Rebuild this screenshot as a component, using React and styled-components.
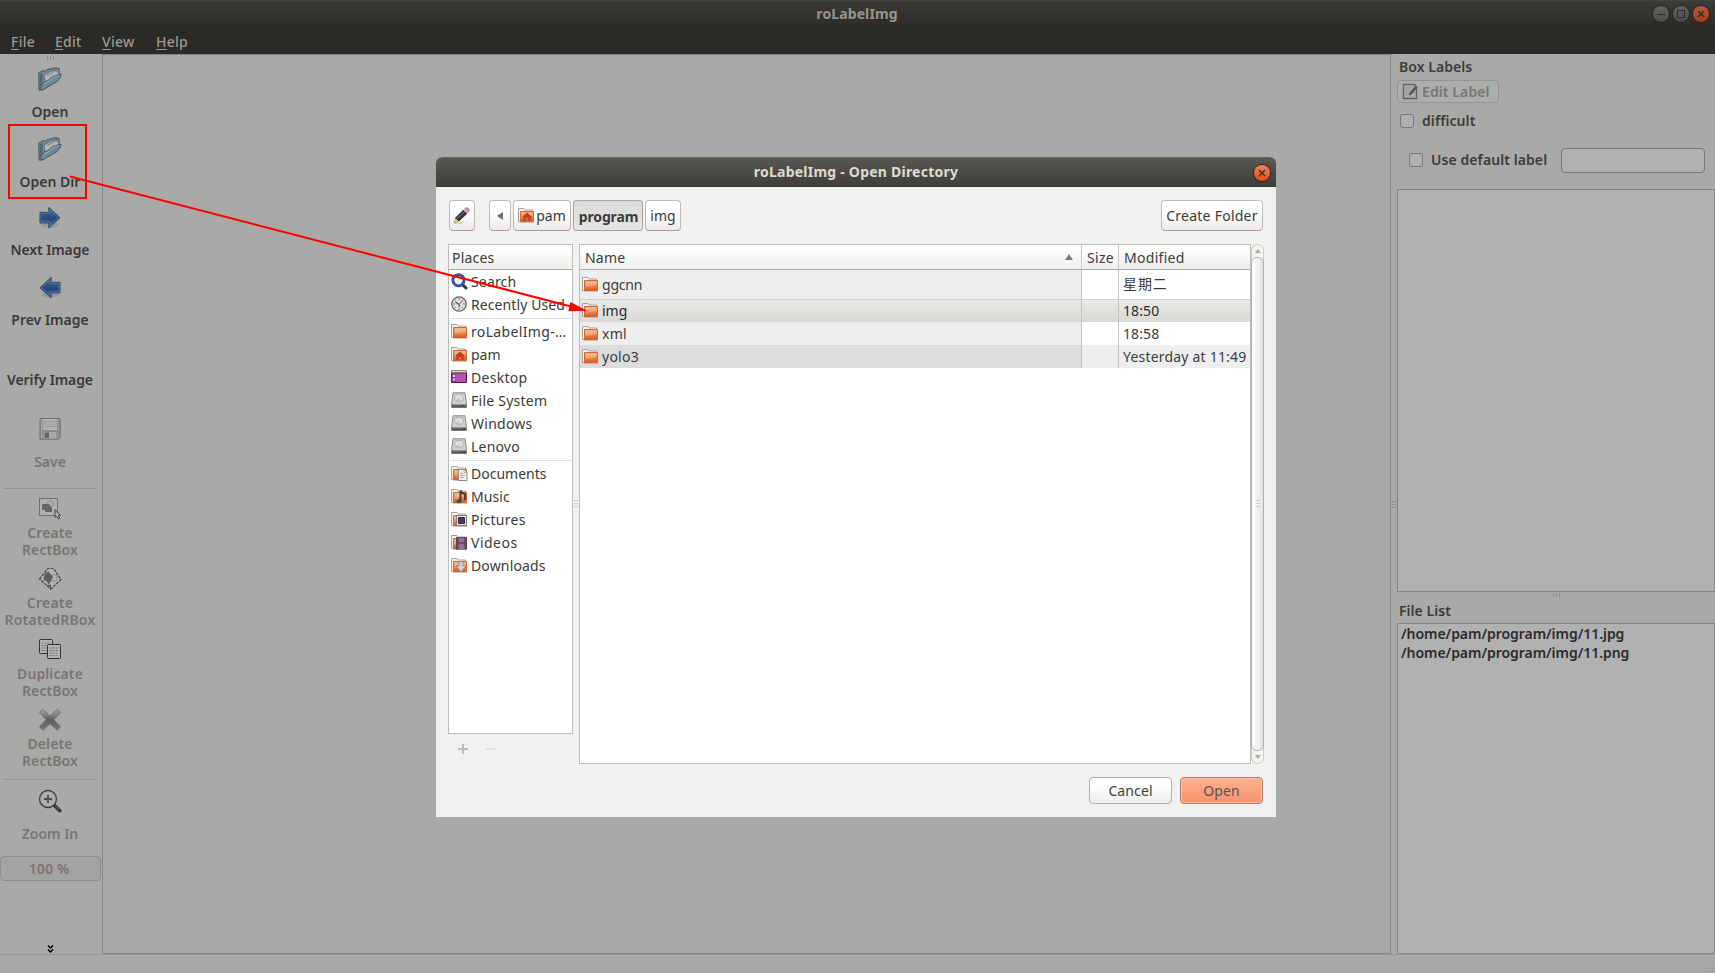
import styled, { createGlobalStyle } from "styled-components";

const GlobalStyle = createGlobalStyle`
  * {
    box-sizing: border-box;
  }
  body {
    margin: 0;
    overflow: hidden;
    font-family: "Noto Sans", "Noto Sans CJK SC", sans-serif;
    font-size: 14px;
    color: #3c3c3c;
    background: #a9a9a7;
  }
`;

const Window = styled.div`
  position: relative;
  display: flex;
  flex-direction: column;
  width: 1715px;
  height: 973px;
  background: #a9a9a7;
  font-weight: 600;
`;

const Header = styled.header`
  height: 54px;
  background: linear-gradient(#45443f 0, #3b3a36 2px, #2b2a26 28px, #2b2a26);
`;
const TitleBar = styled.div`
  display: grid;
  grid-template-columns: 1fr auto 1fr;
  align-items: center;
  height: 28px;
  padding-right: 6px;
`;
const WindowTitle = styled.h1`
  grid-column: 2;
  margin: 0;
  padding-left: 5px;
  font-size: 14px;
  line-height: 28px;
  font-weight: 700;
  color: #96958e;
  letter-spacing: 0.1px;
`;
const WindowButtons = styled.div`
  display: flex;
  justify-content: flex-end;
  gap: 4px;
`;
const RoundButton = styled.span`
  display: flex;
  align-items: center;
  justify-content: center;
  width: 16px;
  height: 16px;
  border-radius: 50%;
  color: ${(p) => p.$mark || "#2b2a26"};
  background: ${(p) => p.$bg || "linear-gradient(#64635d, #4c4b46)"};
  box-shadow: 0 0 0 1px #24231f;
`;
const MenuBar = styled.nav`
  display: flex;
  height: 26px;
`;
const MenuItem = styled.span`
  width: ${(p) => p.$w}px;
  padding-left: ${(p) => p.$pad || 0}px;
  line-height: 27px;
  color: #9b9992;
  font-weight: 500;
  letter-spacing: 0.25px;
  u {
    text-underline-offset: 2px;
    text-decoration-thickness: 1px;
  }
`;

const Main = styled.div`
  display: flex;
  height: 900px;
`;
const ToolBar = styled.aside`
  display: flex;
  flex-direction: column;
  align-items: center;
  width: 102px;
  height: 900px;
  padding: 2px 2px 0 0;
`;
const Tool = styled.div`
  display: flex;
  flex-direction: column;
  align-items: center;
  flex: none;
  width: 100px;
  height: ${(p) => p.$h}px;
  color: ${(p) => (p.$off ? "#777572" : "#3a3a3a")};
`;
const ToolIcon = styled.div`
  display: flex;
  flex: none;
  align-items: center;
  justify-content: center;
  height: ${(p) => (p.$empty ? 24 : 31)}px;
`;
const ToolLabel = styled.div`
  display: flex;
  flex: none;
  align-items: center;
  height: 34px;
  margin-top: ${(p) => p.$shift || 0}px;
  line-height: 17px;
  text-align: center;
  white-space: pre;
  letter-spacing: ${(p) => p.$track || 0}px;
`;
const ToolLine = styled.div`
  flex: none;
  width: 92px;
  height: 2px;
  margin-bottom: ${(p) => p.$mb}px;
  border-top: 1px solid #949492;
  border-bottom: 1px solid #aeaeac;
`;
const ZoomBox = styled.div`
  flex: none;
  align-self: flex-start;
  width: 101px;
  height: 25px;
  border: 1px solid #8e8c8a;
  border-radius: 4px;
  background: #a5a3a1;
  line-height: 24px;
  text-align: center;
  padding-right: 3px;
  color: #777572;
  letter-spacing: 0.15px;
`;
const Spacer = styled.div`
  flex: 1;
`;
const Grip = styled.div`
  flex: none;
  width: ${(p) => (p.$vertical ? 4 : 7)}px;
  height: ${(p) => (p.$vertical ? 7 : 4)}px;
  margin-bottom: ${(p) => p.$mb || 0}px;
  background: repeating-linear-gradient(
    ${(p) => (p.$vertical ? "180deg" : "90deg")},
    ${(p) => p.$color || "#8b8b89"} 0 1px,
    transparent 1px 3px
  );
`;
const Canvas = styled.main`
  width: 1289px;
  height: 900px;
  border: 1px solid #858583;
`;
const Splitter = styled.div`
  display: flex;
  align-items: center;
  width: 6px;
  padding-left: 1px;
`;

const SidePanel = styled.aside`
  display: flex;
  flex-direction: column;
  width: 318px;
`;
const PanelTitle = styled.div`
  height: 26px;
  padding-left: 2px;
  line-height: ${(p) => p.$line || 26}px;
  letter-spacing: 0.05px;
`;
const EditButton = styled.div`
  display: flex;
  align-items: center;
  gap: 4px;
  width: 102px;
  height: 23px;
  padding-left: 4px;
  border: 1px solid #949492;
  border-radius: 4px;
  background: #adadab;
  color: #777675;
  letter-spacing: 0.1px;
`;
const CheckRow = styled.div`
  display: flex;
  align-items: center;
  height: ${(p) => p.$h}px;
  margin-bottom: ${(p) => p.$mb || 0}px;
  padding-left: ${(p) => p.$pad}px;
`;
const CheckBox = styled.span`
  width: 14px;
  height: 14px;
  margin-right: 8px;
  border: 1px solid #767674;
  border-radius: 3px;
  background: #b0b0ae;
`;
const CheckText = styled.span`
  width: ${(p) => p.$w || 120}px;
  padding-bottom: 1px;
  letter-spacing: 0.08px;
`;
const DefaultInput = styled.div`
  width: 144px;
  height: 25px;
  border: 1px solid #777775;
  border-radius: 4px;
  background: #b1b1b0;
`;
const ListBox = styled.div`
  height: ${(p) => p.$h}px;
  padding-left: 3px;
  border: 1px solid #858583;
  background: #b1b1b1;
  color: #2b2b2b;
  line-height: 19px;
  letter-spacing: -0.04px;
`;
const GripRow = styled.div`
  display: flex;
  justify-content: center;
  padding-top: 1px;
  height: 5px;
`;
const StatusBar = styled.footer`
  display: flex;
  align-items: flex-end;
  justify-content: flex-end;
  height: 19px;
  border-top: 1px solid #979795;
`;

/* the file chooser floats over the main window */
const Dialog = styled.section`
  position: absolute;
  left: 436px;
  top: 157px;
  display: flex;
  flex-direction: column;
  width: 840px;
  height: 660px;
  border-radius: 6px 6px 0 0;
  background: #f2f1ef;
  font-weight: 400;
  color: #3c3c3c;
`;
const DialogBar = styled.div`
  display: grid;
  grid-template-columns: 1fr auto 1fr;
  align-items: center;
  height: 30px;
  padding-right: 6px;
  border-radius: 6px 6px 0 0;
  border-top: 1px solid #6a675a;
  background: linear-gradient(#595750, #3e3d39);
`;
const DialogTitle = styled.h2`
  grid-column: 2;
  margin: 0;
  padding: 0 0 2px 6px;
  font-size: 14px;
  font-weight: 700;
  color: #dfdbd2;
  letter-spacing: 0.23px;
`;
const DialogBody = styled.div`
  display: flex;
  flex-direction: column;
  padding: 13px 12px 0 12px;
`;
const PathRow = styled.div`
  display: flex;
  width: 815px;
  height: 44px;
  padding-left: 1px;
`;
const PathButton = styled.span`
  display: flex;
  align-items: center;
  justify-content: center;
  gap: 1px;
  width: ${(p) => p.$w}px;
  height: 31px;
  margin-right: ${(p) => p.$mr || 0}px;
  margin-left: ${(p) => (p.$last ? "auto" : 0)};
  padding: ${(p) => (p.$active ? "2px 0 0 1px" : 0)};
  border: 1px solid ${(p) => (p.$active ? "#a9a59f" : "#bfbab4")};
  border-bottom-color: #a5a19b;
  border-radius: 4px;
  background: ${(p) =>
    p.$active ? "linear-gradient(#dddbd9, #e6e4e2)" : "linear-gradient(#fff 40%, #ebe9e7)"};
  font-weight: ${(p) => (p.$active ? 700 : 400)};
  letter-spacing: ${(p) => p.$track || 0}px;
  white-space: nowrap;
`;
const Panes = styled.div`
  display: flex;
  height: 520px;
`;
const PlacesPane = styled.div`
  flex: none;
  width: 125px;
`;
const PlacesBox = styled.div`
  height: 490px;
  border: 1px solid #bfbbb6;
  background: #fff;
`;
const HeadRow = styled.div`
  display: flex;
  height: 25px;
  border-bottom: 1px solid #aeaaa5;
  background: linear-gradient(#fff, #f0efed);
  line-height: 25px;
`;
const HeadCell = styled.div`
  display: flex;
  align-items: center;
  justify-content: space-between;
  width: ${(p) => p.$w}px;
  padding: 0 8px 0 ${(p) => p.$pad}px;
  border-right: ${(p) => (p.$end ? "none" : "1px solid #cbc8c4")};
  letter-spacing: ${(p) => p.$track || 0}px;
`;
const PlaceRow = styled.div`
  display: flex;
  align-items: center;
  gap: 3px;
  height: 23px;
  padding-left: 2px;
  white-space: nowrap;
  letter-spacing: ${(p) => p.$track || 0}px;
  svg {
    flex: none;
  }
`;
const PlaceLine = styled.div`
  height: 4px;
  margin: 0 1px;
  background: linear-gradient(#fff 2px, #e1e0df 2px 3px, #fff 3px);
`;
const AddRemove = styled.div`
  display: flex;
  gap: 18px;
  padding: 10px 0 0 10px;
`;
const FilesBox = styled.div`
  flex: none;
  width: 672px;
  height: 520px;
  border: 1px solid #bfbbb6;
  background: #fff;
`;
const FileRow = styled.div`
  display: flex;
  height: ${(p) => p.$h || 23}px;
  background: ${(p) => p.$bg || "#fff"};
  color: ${(p) => (p.$hot ? "#2a2a2a" : "#3c3c3c")};
  box-shadow: ${(p) => (p.$hot ? "inset 0 1px #cfcecb" : "none")};
`;
const FileCell = styled.div`
  display: flex;
  align-items: center;
  gap: 3px;
  width: ${(p) => p.$w}px;
  padding-left: ${(p) => p.$pad || 0}px;
  border-right: ${(p) => (p.$end ? "none" : "1px solid #c4c3c1")};
  background: ${(p) => p.$bg || "none"};
  letter-spacing: ${(p) => p.$track || 0}px;
  line-height: 21px;
  padding-bottom: ${(p) => p.$lift || 0}px;
  white-space: nowrap;
`;
const PaneGap = styled.div`
  display: flex;
  flex: none;
  align-items: center;
  justify-content: center;
  width: 6px;
  padding-bottom: 2px;
`;
const ScrollBar = styled.div`
  display: flex;
  flex: none;
  flex-direction: column;
  align-items: center;
  width: 13px;
  height: 520px;
  border: 1px solid #cbc8c4;
  border-radius: 7px;
  background: #f4f3f1;
`;
const ScrollArrow = styled.div`
  display: flex;
  align-items: center;
  height: 12px;
`;
const ScrollThumb = styled.div`
  display: flex;
  align-items: center;
  justify-content: center;
  width: 13px;
  height: 494px;
  padding-bottom: 2px;
  border: 1px solid #b1aeaa;
  border-radius: 6px;
  background: linear-gradient(90deg, #fff, #e4e3e1);
`;
const Actions = styled.div`
  display: flex;
  justify-content: flex-end;
  gap: 8px;
  width: 815px;
  padding-top: 13px;
`;
const ActionButton = styled.span`
  width: 83px;
  height: 27px;
  border: 1px solid ${(p) => (p.$primary ? "#a87c68" : "#b5b1ac")};
  border-radius: 4px;
  background: ${(p) =>
    p.$primary ? "linear-gradient(#ffb091, #f6926b)" : "linear-gradient(#fff 30%, #ededec)"};
  box-shadow: ${(p) => (p.$primary ? "inset 0 0 0 1px #ffbfa5" : "none")};
  line-height: 25px;
  text-align: center;
  color: ${(p) => (p.$primary ? "#565353" : "#3f3f3f")};
  letter-spacing: 0.1px;
`;

/* red annotation drawn on top of everything */
const Mark = styled.svg`
  position: absolute;
  left: 0;
  top: 0;
  pointer-events: none;
`;

const OpenIcon = () => (
  <svg width="24" height="24" viewBox="0 0 24 24">
    <defs>
      <linearGradient id="openFront" x1="0" y1="0" x2="1" y2="1">
        <stop offset="0" stopColor="#86a5b3" />
        <stop offset="1" stopColor="#4e7388" />
      </linearGradient>
    </defs>
    <path d="M.8 6 5 3.600l2.800.6 1-1.500L18 .6l3.300 1.200-.6 6L5 23H1z" fill="#728b97" stroke="#454f54" strokeWidth=".9" />
    <path d="M6 8 12 4.500l7-2 2.500.5L20 8 7 16.500z" fill="#b2b3b2" stroke="#5b6164" strokeWidth=".8" />
    <path d="m9 8.500 9-5M18 2l1 3 2-1" fill="none" stroke="#6c7072" strokeWidth=".8" />
    <path d="M1.500 22.800 5.300 15.500 10 13.500l4.200-3.600L23.200 7c-.4 3-2 5-4 7.500L5.500 22.500z" fill="url(#openFront)" stroke="#3d525e" strokeWidth=".9" />
    <path d="M6 16.800 10.500 14.500l4-3.500 7-2.800" fill="none" stroke="#9cb6c1" strokeWidth=".8" />
    <path d="M1.800 7v14l2.800-6V6" fill="#566871" />
  </svg>
);

const ArrowIcon = ({ left }) => (
  <svg width="22" height="24" viewBox="0 0 22 24" transform={left ? "scale(-1 1)" : undefined}>
    <defs>
      <linearGradient id="arrowFill" x1="0" y1="0" x2="0" y2="1">
        <stop offset="0" stopColor="#51709a" />
        <stop offset=".55" stopColor="#234879" />
        <stop offset="1" stopColor="#4470a0" />
      </linearGradient>
    </defs>
    <ellipse cx="11" cy="19" rx="9" ry="2.500" fill="#999997" />
    <path d="M1 6.300h8.800V1.400L21 11.700 9.800 22v-5H1z" fill="url(#arrowFill)" stroke="#2e486c" />
    <path d="M2 7.300h8.800V3.700l8.500 8-8.500 8V16H2z" fill="none" stroke="#6683a8" strokeWidth=".7" />
  </svg>
);

const SaveIcon = () => (
  <svg width="22" height="22" viewBox="0 0 22 22">
    <path d="M1 1.500q0-1 1-1h18q1.200 0 1.200 1.200V19l-2 2.300H2q-1 0-1-1z" fill="#929291" stroke="#6e6e6d" />
    <path d="M3.800 1h14.400v11H3.800z" fill="#b1b1b0" />
    <path d="M4 3.500h14M4 6h14M4 8.500h14" stroke="#9b9b9a" />
    <path d="M5 13.500h13V21H5z" fill="#a9a9a8" stroke="#878786" />
    <path d="M6 14.500h4V20H6z" fill="#666" />
    <path d="M2.500 2v17.500h2" fill="none" stroke="#adadac" />
  </svg>
);

const CreateIcon = ({ rotated }) =>
  rotated ? (
    <svg width="24" height="24" viewBox="0 0 24 24">
      <path d="M1.500 12 10 1.500h5.500L23 12.500 13 22z" fill="#b2b2b1" stroke="#444" strokeWidth="1.200" strokeDasharray="3 1" />
      <circle cx="16" cy="11" r="3.300" fill="none" stroke="#8a8a89" />
      <path d="m10.500 4.500 4.500 5.500-4 7.500-2.500-3.500-3-1 1-6z" fill="#5c5c5c" />
      <path d="m9 19 3.500-1v4.500" fill="none" stroke="#444" />
    </svg>
  ) : (
    <svg width="24" height="24" viewBox="0 0 24 24">
      <path d="M1.500 1.500h18v17h-18z" fill="#b0b0af" stroke="#333" strokeDasharray="1 1" />
      <circle cx="12" cy="7" r="3.200" fill="none" stroke="#898988" />
      <path d="M4 7h7l3 4v4H7v-2H4z" fill="#666" />
      <path d="M17 12.500v8l1.800-1.400 1.600 3 1.500-.8-1.400-2.800h2z" fill="#b0b0af" stroke="#3c3c3c" strokeWidth=".9" />
    </svg>
  );

const DuplicateIcon = () => (
  <svg width="24" height="22" viewBox="0 0 24 22">
    <rect x="1.500" y="1.500" width="13" height="14" rx="1" fill="#b0b0af" stroke="#333" />
    <path d="M3.500 5h8M3.500 7.500h8M3.500 10h6M3.500 12.500h6" stroke="#757574" strokeDasharray="2 1" />
    <rect x="9.500" y="6.500" width="13" height="14" rx="1" fill="#b3b3b2" stroke="#333" />
    <path d="M11.500 10h9M11.500 12.500h9M11.500 15h9M11.500 17.500h9" stroke="#757574" strokeDasharray="2 1" />
  </svg>
);

const DeleteIcon = () => (
  <svg width="24" height="24" viewBox="0 0 24 24">
    <defs>
      <linearGradient id="deleteFill" x1="0" y1="0" x2="0" y2="1">
        <stop offset="0" stopColor="#a5a5a4" />
        <stop offset=".5" stopColor="#5e5e5e" />
        <stop offset="1" stopColor="#757575" />
      </linearGradient>
    </defs>
    <path
      d="M4.800 1.500 12 8l7.200-6.500 3.300 3-6.600 7.200 6.600 7-3.300 3.600L12 15.800l-7.200 6.500-3.300-3.600 6.600-7-6.600-7.200z"
      fill="url(#deleteFill)"
      stroke="#737372"
      strokeLinejoin="round"
    />
  </svg>
);

const ZoomIcon = () => (
  <svg width="24" height="24" viewBox="0 0 24 24">
    <path d="m17 17 4.800 4.800" stroke="#393939" strokeWidth="3.600" strokeLinecap="round" />
    <path d="m18 17.500 3.500 3.500" stroke="#787877" strokeWidth=".8" />
    <circle cx="10" cy="10" r="8.500" fill="#aeaead" stroke="#3d3d3c" strokeWidth="1.300" />
    <path d="M10 6v8M6 10h8" stroke="#4f4f4e" strokeWidth="1.800" />
  </svg>
);

const EditIcon = () => (
  <svg width="16" height="17" viewBox="0 0 16 17">
    <path d="M1.500 1.500h11L14.500 4v11.500h-13z" fill="#aaaaa9" stroke="#636362" strokeWidth="1.300" />
    <path d="M3.500 5h6M3.500 7.500h4M3.500 10h3" stroke="#979796" />
    <path d="m13.500 3.500 1.500 1-5.500 6.500-2.500 1 1-2.500z" fill="#5b5b5a" stroke="#4a4a4a" strokeWidth=".8" />
  </svg>
);

const FolderIcon = ({ kind }) => (
  <svg width="17" height="17" viewBox="0 0 17 17">
    <defs>
      <linearGradient id="folderFill" x1="0" y1="0" x2="0" y2="1">
        <stop offset="0" stopColor="#f5b47d" />
        <stop offset="1" stopColor="#df5a20" />
      </linearGradient>
    </defs>
    <path d="M.5 14.500v-13h5.500l1 1.500h7.500V14.500z" fill="#f6f5f4" stroke="#a3a09d" />
    <path d="M2.500 4.500h13v10h-13z" fill="url(#folderFill)" stroke="#d26434" />
    <path d="M3.500 5.500h11v3.500l-11 2z" fill="#fff" opacity=".22" />
    <path d="M2 15.500h14" stroke="#b6b2ae" opacity=".7" />
    {kind === "home" && <path d="m3.800 10 5.200-4.500 5.200 4.500h-1.500v4h-2.400v-3H7.800v3H5.200v-4z" fill="#bf4022" />}
    {kind === "documents" && (
      <g>
        <path d="M7.500 4.500h6l2.500 2.500v8.500H7.500z" fill="#f0efee" stroke="#8e8c8a" />
        <path d="M13 4.500V7.500h3M9 8.500h3M9 10.500h5M9 12.500h4" fill="none" stroke="#aaa8a6" />
      </g>
    )}
    {kind === "music" && (
      <g>
        <path d="M9.500 13V2.500q1 3 4.500 3.500v6" fill="none" stroke="#3c3937" strokeWidth="1.900" />
        <ellipse cx="8" cy="13.200" rx="2.500" ry="2" fill="#4c4947" />
      </g>
    )}
    {kind === "pictures" && (
      <g>
        <path d="M5.500 4.500h10v10h-10z" fill="#f1efee" stroke="#7a7876" />
        <path d="M7.500 6.500h6v6h-6z" fill="#4a3b66" stroke="#2f2a36" />
      </g>
    )}
    {kind === "videos" && (
      <g>
        <path d="M5 3h11v12.500H5z" fill="#3a3439" />
        <path d="M7.500 3.500h6V8.500h-6zM7.500 9.500h6v5.500h-6z" fill="#966a9b" />
        <path d="M6.200 3.500v12M14.800 3.500v12" stroke="#c8c5c6" strokeDasharray="1 1" strokeWidth=".8" />
      </g>
    )}
    {kind === "downloads" && (
      <path d="M8 4.500h4V9h3l-5 6-5-6h3z" fill="#d5d3d1" stroke="#8a8784" strokeWidth=".9" />
    )}
  </svg>
);

const PlaceIcon = ({ kind }) => {
  if (kind === "search") {
    return (
      <svg width="17" height="17" viewBox="0 0 17 17">
        <path d="m11.500 11.500 3.500 3.500" stroke="#333" strokeWidth="3" strokeLinecap="round" />
        <circle cx="7.500" cy="7.200" r="5.600" fill="#eef2f8" stroke="#27408b" strokeWidth="2.800" />
        <circle cx="7.500" cy="7.200" r="5.800" fill="none" stroke="#6b86c4" strokeWidth=".7" />
      </svg>
    );
  }
  if (kind === "recent") {
    return (
      <svg width="17" height="17" viewBox="0 0 17 17">
        <circle cx="8" cy="8" r="7.200" fill="#dededc" stroke="#62625f" strokeWidth="1.300" />
        <path d="M8 2v2M8 12v2M2 8h2M12 8h2M3.800 3.800l1.200 1.200M11 11l1.200 1.200M3.800 12.200 5 11" stroke="#888" />
        <path d="M4.500 6 8 8.500l.5 2.500" fill="none" stroke="#444" strokeWidth="1.100" />
        <path d="m8 8.500 4.500-5" stroke="#d94a38" />
      </svg>
    );
  }
  if (kind === "desktop") {
    return (
      <svg width="17" height="17" viewBox="0 0 17 17">
        <path d="M.5 2.500h15v11h-15z" fill="#a33ca0" stroke="#5a1858" />
        <path d="M4.500 5.500h10v7h-10z" fill="#c268bf" opacity=".6" />
        <path d="M.5 1.500h15v2H.5z" fill="#dcd9bf" stroke="#77735c" strokeWidth=".8" />
        <path d="M2 6h1.800v2H2zM2 9.500h1.800v2H2z" fill="#f2e4f1" />
      </svg>
    );
  }
  if (kind === "drive") {
    return (
      <svg width="17" height="17" viewBox="0 0 17 17">
        <path d="M2 .8h12l1.500 11.700v3H.5v-3z" fill="#d0d0ce" stroke="#888886" />
        <ellipse cx="8" cy="5.800" rx="4.500" ry="3.500" fill="#dfdfdd" stroke="#b1b1af" />
        <path d="M5.500 9 8 6.500" stroke="#a1a19f" />
        <path d="M1 12.500h14v2.800H1z" fill="#555553" />
        <path d="M2 13h8" stroke="#8d8d8b" />
      </svg>
    );
  }
  return <FolderIcon kind={kind} />;
};

const PencilIcon = () => (
  <svg width="18" height="18" viewBox="0 0 18 18">
    <path d="M1 15.500q4 2 10-.5" fill="none" stroke="#d9d5a0" strokeWidth="1.500" />
    <path d="m1 16 1.500-5 3.500 3z" fill="#e9dd93" stroke="#8a8453" strokeWidth=".6" />
    <path d="M2.500 11 10.500 3l3.500 3.500L6 14z" fill="#353533" stroke="#1f1f1e" strokeWidth=".7" />
    <path d="M4.500 11.500 11.500 4.500" stroke="#777774" />
    <path d="m10.500 3 1.300-1.300 3.500 3.500L14 6.500z" fill="#c3c3c1" />
    <path d="m11.800 1.700 1.200-1q2.500-.5 3.500 2.500l-1.200 2z" fill="#d78bbd" stroke="#a7628f" strokeWidth=".6" />
  </svg>
);

const Cross = () => (
  <svg width="8" height="8" viewBox="0 0 8 8">
    <path d="m1 1 6 6M7 1 1 7" stroke="currentColor" strokeWidth="1.300" />
  </svg>
);

const tools = [
  { text: "Open", h: 70, icon: <OpenIcon /> },
  { text: "Open Dir", h: 69, icon: <OpenIcon /> },
  { text: "Next Image", h: 70, icon: <ArrowIcon />, shift: -1, track: -0.1 },
  { text: "Prev Image", h: 66, icon: <ArrowIcon left />, shift: -1 },
  { text: "Verify Image", h: 75, track: -0.1 },
  { text: "Save", h: 75, icon: <SaveIcon />, off: true },
  { line: true, mb: 3 },
  { text: "Create\nRectBox", h: 70, icon: <CreateIcon />, off: true, track: 0.1 },
  { text: "Create\nRotatedRBox", h: 70, icon: <CreateIcon rotated />, off: true, track: 0.22 },
  { text: "Duplicate\nRectBox", h: 71, icon: <DuplicateIcon />, off: true, shift: 1, track: 0.1 },
  { text: "Delete\nRectBox", h: 75, icon: <DeleteIcon />, off: true, track: 0.1 },
  { line: true, mb: 4 },
  { text: "Zoom In", h: 71, icon: <ZoomIcon />, off: true },
];

const places = [
  { text: "Search", kind: "search", track: 0.15 },
  { text: "Recently Used", kind: "recent", track: 0.1 },
  { line: true },
  { text: "roLabelImg-…", kind: "folder", track: 0.35 },
  { text: "pam", kind: "home" },
  { text: "Desktop", kind: "desktop", track: 0.3 },
  { text: "File System", kind: "drive", track: 0.25 },
  { text: "Windows", kind: "drive", track: 0.25 },
  { text: "Lenovo", kind: "drive", track: 0.2 },
  { line: true },
  { text: "Documents", kind: "documents" },
  { text: "Music", kind: "music", track: 0.1 },
  { text: "Pictures", kind: "pictures", track: 0.25 },
  { text: "Videos", kind: "videos", track: 0.5 },
  { text: "Downloads", kind: "downloads", track: 0.15 },
];

const files = [
  { name: "ggcnn", modified: "星期二", h: 29, first: "#eeeeee", track: 0.9, lift: 2, nameTrack: -0.2 },
  { name: "img", modified: "18:50", bg: "linear-gradient(#ebeae8, #dad9d6)", hot: true, track: 0.1 },
  { name: "xml", modified: "18:58", first: "#eeeeee", track: 0.1, nameTrack: 0.3 },
  { name: "yolo3", modified: "Yesterday at 11:49", bg: "#eeeeee", first: "#dcdcdc", track: 0.2, nameTrack: 0.25 },
];

const FileDialog = () => (
  <Dialog>
    <DialogBar>
      <DialogTitle>roLabelImg - Open Directory</DialogTitle>
      <WindowButtons>
        <RoundButton $bg="linear-gradient(#f2825c, #dd4e1d)" $mark="#4a2a1c">
          <Cross />
        </RoundButton>
      </WindowButtons>
    </DialogBar>
    <DialogBody>
      <PathRow>
        <PathButton $w={26} $mr={14}>
          <PencilIcon />
        </PathButton>
        <PathButton $w={22} $mr={2}>
          <svg width="6" height="8" viewBox="0 0 6 8">
            <path d="M6 0v8L0 4z" fill="#72706d" />
          </svg>
        </PathButton>
        <PathButton $w={58} $mr={2}>
          <FolderIcon kind="home" />
          pam
        </PathButton>
        <PathButton $w={70} $mr={2} $track={-0.15} $active>
          program
        </PathButton>
        <PathButton $w={36}>img</PathButton>
        <PathButton $w={102} $track={0.25} $last>
          Create Folder
        </PathButton>
      </PathRow>
      <Panes>
        <PlacesPane>
          <PlacesBox>
            <HeadRow>
              <HeadCell $w={123} $pad={3} $track={0.2} $end>
                Places
              </HeadCell>
            </HeadRow>
            {places.map((place, i) =>
              place.line ? (
                <PlaceLine key={i} />
              ) : (
                <PlaceRow key={i} $track={place.track}>
                  <PlaceIcon kind={place.kind} />
                  {place.text}
                </PlaceRow>
              )
            )}
          </PlacesBox>
          <AddRemove>
            <svg width="10" height="10" viewBox="0 0 10 10">
              <path d="M5 0v10M0 5h10" stroke="#bdbcba" strokeWidth="2" />
            </svg>
            <svg width="10" height="10" viewBox="0 0 10 10">
              <path d="M0 5h10" stroke="#e1e0de" strokeWidth="2" />
            </svg>
          </AddRemove>
        </PlacesPane>
        <PaneGap>
          <Grip $vertical $color="#cfcdca" />
        </PaneGap>
        <FilesBox>
          <HeadRow>
            <HeadCell $w={502} $pad={5} $track={0.2}>
              Name
              <svg width="8" height="6" viewBox="0 0 8 6">
                <path d="M0 6h8L4 0z" fill="#7c7a77" />
              </svg>
            </HeadCell>
            <HeadCell $w={37} $pad={5} $track={0.3}>
              Size
            </HeadCell>
            <HeadCell $w={131} $pad={5} $track={0.3} $end>
              Modified
            </HeadCell>
          </HeadRow>
          {files.map((file) => (
            <FileRow key={file.name} $h={file.h} $bg={file.bg} $hot={file.hot}>
              <FileCell $w={502} $pad={2} $bg={file.first} $track={file.nameTrack}>
                <FolderIcon />
                {file.name}
              </FileCell>
              <FileCell $w={37} />
              <FileCell $w={131} $pad={4} $track={file.track} $lift={file.lift} $end>
                {file.modified}
              </FileCell>
            </FileRow>
          ))}
        </FilesBox>
        <ScrollBar>
          <ScrollArrow>
            <svg width="6" height="4" viewBox="0 0 6 4">
              <path d="M0 4h6L3 0z" fill="#a9a6a3" />
            </svg>
          </ScrollArrow>
          <ScrollThumb>
            <Grip $vertical $color="#c9c7c4" />
          </ScrollThumb>
          <ScrollArrow>
            <svg width="6" height="4" viewBox="0 0 6 4">
              <path d="M0 0h6L3 4z" fill="#a9a6a3" />
            </svg>
          </ScrollArrow>
        </ScrollBar>
      </Panes>
      <Actions>
        <ActionButton>Cancel</ActionButton>
        <ActionButton $primary>Open</ActionButton>
      </Actions>
    </DialogBody>
  </Dialog>
);

const App = () => {
  return (
    <>
      <GlobalStyle />
      <Window>
        <Header>
          <TitleBar>
            <WindowTitle>roLabelImg</WindowTitle>
            <WindowButtons>
              <RoundButton>
                <svg width="8" height="8" viewBox="0 0 8 8">
                  <path d="M0 4.500h8" stroke="currentColor" />
                </svg>
              </RoundButton>
              <RoundButton>
                <svg width="8" height="8" viewBox="0 0 8 8">
                  <path d="M.5.5h7v7h-7z" fill="none" stroke="currentColor" />
                </svg>
              </RoundButton>
              <RoundButton $bg="linear-gradient(#b45c40, #a93a14)">
                <Cross />
              </RoundButton>
            </WindowButtons>
          </TitleBar>
          <MenuBar>
            <MenuItem $w={55} $pad={11}>
              <u>F</u>ile
            </MenuItem>
            <MenuItem $w={47}>
              <u>E</u>dit
            </MenuItem>
            <MenuItem $w={54}>
              <u>V</u>iew
            </MenuItem>
            <MenuItem $w={50}>
              <u>H</u>elp
            </MenuItem>
          </MenuBar>
        </Header>
        <Main>
          <ToolBar>
            <Grip $mb={3} />
            {tools.map((tool, i) =>
              tool.line ? (
                <ToolLine key={i} $mb={tool.mb} />
              ) : (
                <Tool key={i} $h={tool.h} $off={tool.off}>
                  <ToolIcon $empty={!tool.icon}>{tool.icon}</ToolIcon>
                  <ToolLabel $track={tool.track} $shift={tool.shift}>
                    {tool.text}
                  </ToolLabel>
                </Tool>
              )
            )}
            <ZoomBox>100 %</ZoomBox>
            <Spacer />
            <svg width="7" height="10" viewBox="0 0 7 10">
              <path d="m1 1.500 2.500 2.500L6 1.500M1 5.500 3.500 8 6 5.500" fill="none" stroke="#000" strokeWidth="1.500" />
            </svg>
          </ToolBar>
          <Canvas />
          <Splitter>
            <Grip $vertical />
          </Splitter>
          <SidePanel>
            <PanelTitle>Box Labels</PanelTitle>
            <EditButton>
              <EditIcon />
              Edit Label
            </EditButton>
            <CheckRow $h={36} $pad={3}>
              <CheckBox />
              <CheckText>difficult</CheckText>
            </CheckRow>
            <CheckRow $h={42} $pad={12} $mb={8}>
              <CheckBox />
              <CheckText $w={130}>Use default label</CheckText>
              <DefaultInput />
            </CheckRow>
            <ListBox $h={403} />
            <GripRow>
              <Grip />
            </GripRow>
            <PanelTitle $line={28}>File List</PanelTitle>
            <ListBox $h={331}>
              <div>/home/pam/program/img/11.jpg</div>
              <div>/home/pam/program/img/11.png</div>
            </ListBox>
          </SidePanel>
        </Main>
        <StatusBar>
          <svg width="12" height="12" viewBox="0 0 12 12">
            <path d="M10 1v11M7 4v8M4 7v5M1 10v2" stroke="#8a8a88" strokeDasharray="1 2" />
          </svg>
        </StatusBar>
        <FileDialog />
        <Mark width="1715" height="973" viewBox="0 0 1715 973">
          <rect x="9" y="125" width="77" height="73" fill="none" stroke="#f00" strokeWidth="2" />
          <path d="M70 176.500 573 307" stroke="#f00" strokeWidth="2" />
          <path d="M570.500 302 587 310.700l-18.700.6z" fill="#f00" />
        </Mark>
      </Window>
    </>
  );
};

export default App;
